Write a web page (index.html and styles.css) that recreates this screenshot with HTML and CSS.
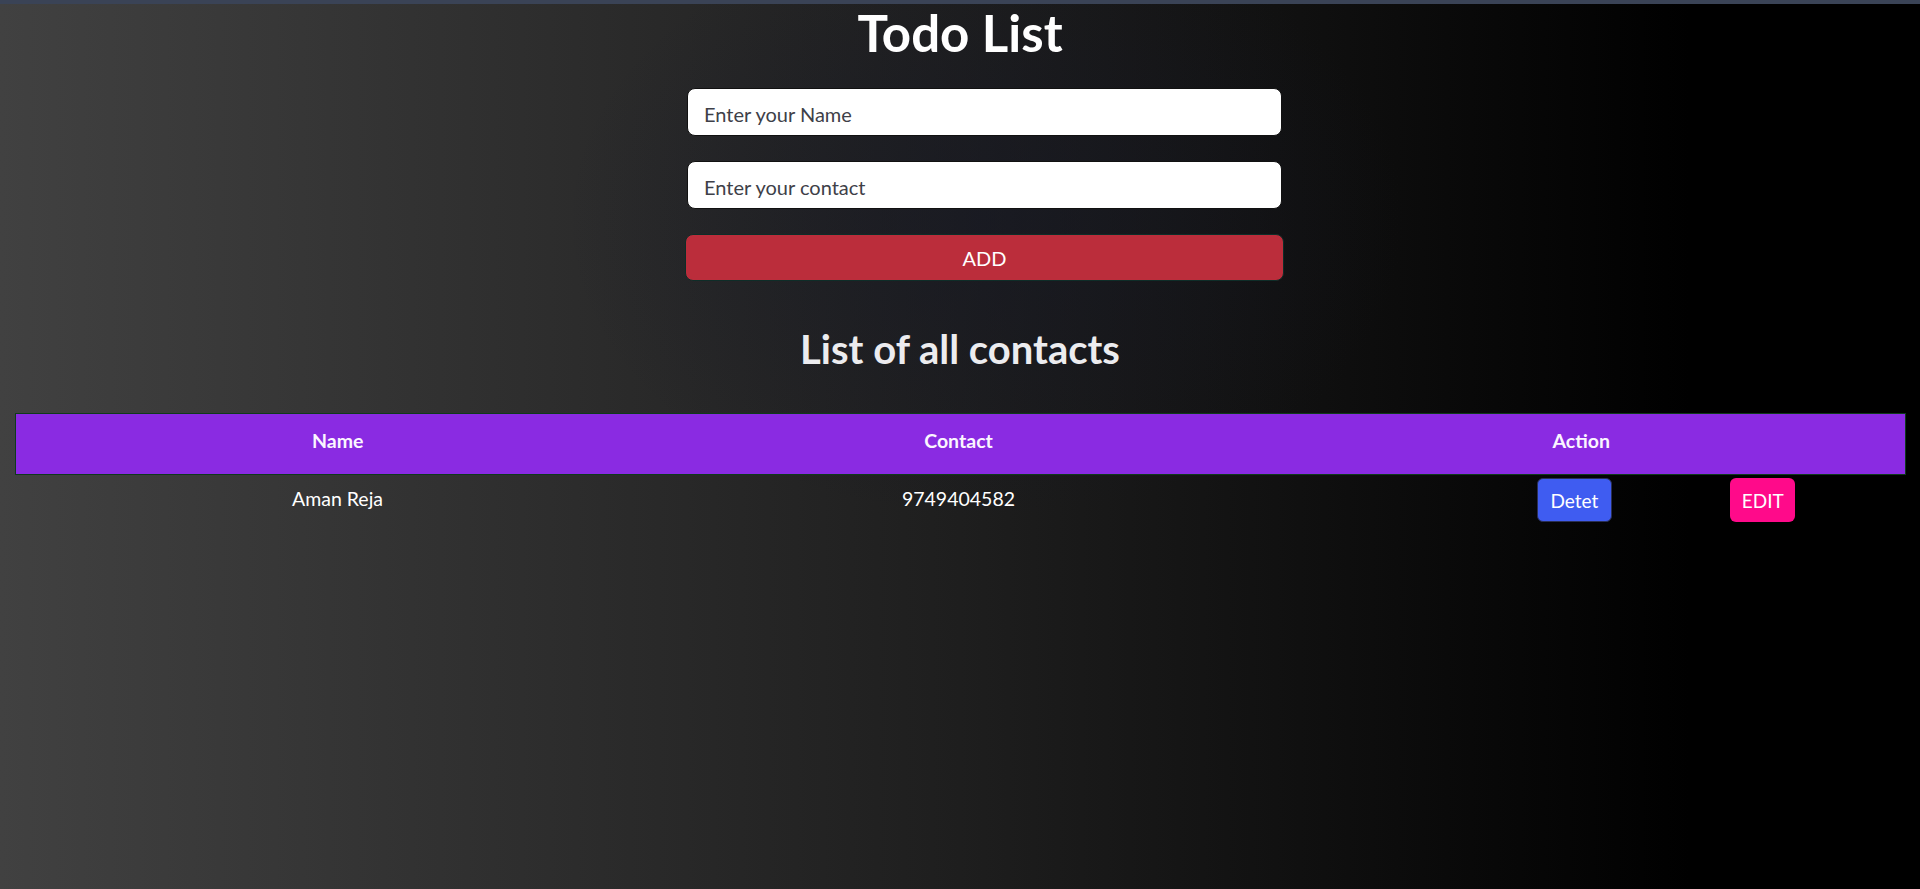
FILE: index.html
```html
<!DOCTYPE html>
<html lang="en">
<head>
<meta charset="utf-8">
<title>Todo List</title>
<link rel="stylesheet" href="styles.css">
</head>
<body>
<div class="topbar"></div>
<main class="page">
  <h1 class="title">Todo List</h1>
  <div class="form-wrap">
    <form class="todo-form">
      <input class="field" type="text" placeholder="Enter your Name">
      <input class="field" type="text" placeholder="Enter your contact">
      <button class="add-btn" type="button">ADD</button>
    </form>
  </div>
  <h2 class="subtitle">List of all contacts</h2>
  <table class="contacts">
    <colgroup>
      <col class="c-name">
      <col class="c-contact">
      <col class="c-action">
    </colgroup>
    <thead>
      <tr>
        <th>Name</th>
        <th>Contact</th>
        <th>Action</th>
      </tr>
    </thead>
    <tbody>
      <tr>
        <td>Aman Reja</td>
        <td>9749404582</td>
        <td class="action-cell">
          <div class="actions">
            <button class="btn btn-delete" type="button">Detet</button>
            <button class="btn btn-edit" type="button">EDIT</button>
          </div>
        </td>
      </tr>
    </tbody>
  </table>
</main>
</body>
</html>
```

FILE: styles.css
```css
html, body {
  margin: 0;
  padding: 0;
}

body {
  min-height: 889px;
  font-family: "Lato", "Noto Sans", "Liberation Sans", sans-serif;
  color: #ffffff;
  background:
    radial-gradient(ellipse 420px 300px at 984px 220px, rgba(22, 24, 38, 0.55), rgba(22, 24, 38, 0) 100%),
    linear-gradient(to right, #414141 0%, #1e1e1e 50%, #000000 88%, #000000 100%);
}

.topbar {
  height: 4px;
  background: #3a4356;
}

.page {
  display: flex;
  flex-direction: column;
}

.title {
  margin: 0;
  text-align: center;
  font-size: 51px;
  line-height: 58px;
  font-weight: 700;
  color: #ffffff;
}

.form-wrap {
  display: flex;
  justify-content: center;
  padding-left: 49px;
  margin-top: 26px;
}

.todo-form {
  width: 599px;
  display: flex;
  flex-direction: column;
}

.field {
  box-sizing: border-box;
  height: 48px;
  margin: 0 2px 25px;
  padding: 3px 16px 0;
  border: 1px solid #111;
  border-radius: 8px;
  background: #ffffff;
  font-family: inherit;
  font-size: 20px;
  color: #212529;
}

.field::placeholder {
  color: #3e4048;
}

.add-btn {
  box-sizing: border-box;
  height: 47px;
  border: 1px solid #0e2d28;
  border-radius: 8px;
  background: #bb2d3b;
  color: #ffffff;
  font-family: inherit;
  font-size: 20px;
}

.subtitle {
  margin: 44px 0 0;
  text-align: center;
  font-size: 40px;
  line-height: 48px;
  font-weight: 700;
  color: #ececef;
}

.contacts {
  margin: 40px 15px 0;
  width: 1890px;
  border-collapse: collapse;
  table-layout: fixed;
  font-size: 19.5px;
}

.c-name { width: 644px; }
.c-contact { width: 598px; }
.c-action { width: 648px; }

.contacts thead tr {
  background: #8a2be2;
  border: 1px solid #0f3a1c;
}

.contacts th {
  height: 61px;
  padding: 0 0 8px;
  box-sizing: border-box;
  font-weight: 700;
  color: #fbf6ff;
  text-align: center;
  vertical-align: middle;
}

.contacts td {
  padding: 0 0 2px;
  height: 46px;
  text-align: center;
  vertical-align: middle;
  color: #ffffff;
}

.contacts td.action-cell {
  text-align: left;
  padding: 2px 0 0;
}

.actions {
  display: flex;
  gap: 118px;
  padding-left: 279px;
}

.btn {
  box-sizing: border-box;
  height: 44px;
  padding: 0 13px;
  border: 1px solid transparent;
  border-radius: 6px;
  color: #ffffff;
  font-family: inherit;
  font-size: 19px;
}

.btn-delete {
  background: #3f5cf1;
  border-color: #2a2f55;
}

.btn-edit {
  width: 65px;
  padding: 0;
  background: #ff0a8a;
}
```
